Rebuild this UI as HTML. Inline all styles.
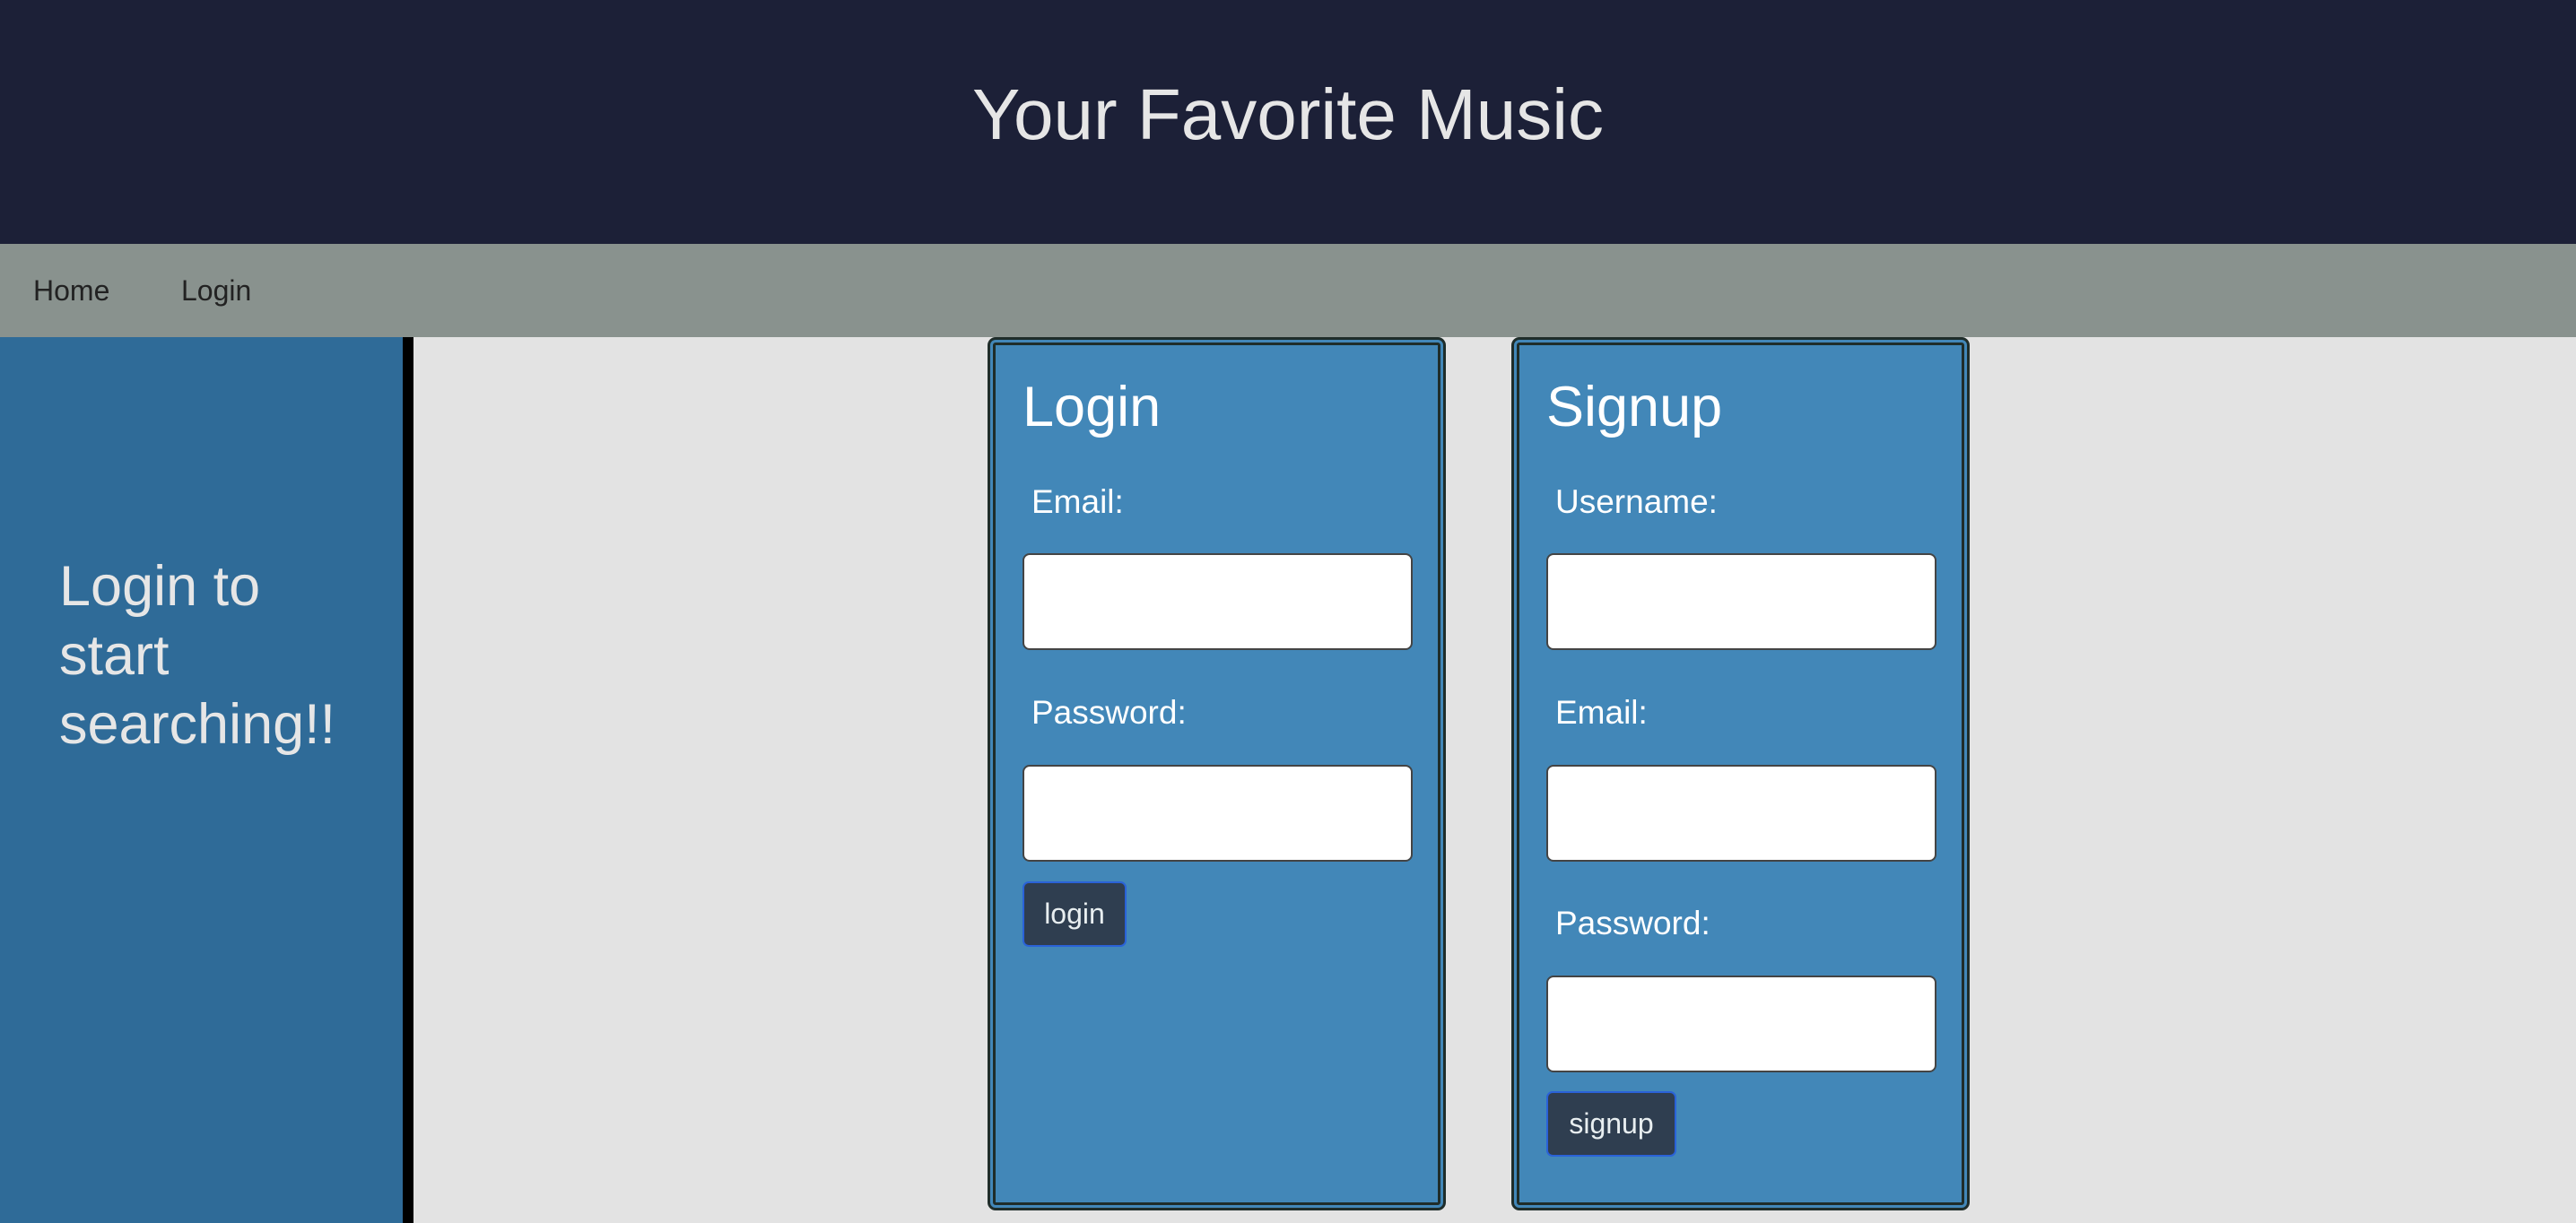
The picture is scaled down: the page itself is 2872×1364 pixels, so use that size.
<!DOCTYPE html>
<html><head><meta charset="utf-8"><style>
*{box-sizing:border-box;margin:0;padding:0}
body{width:2872px;height:1364px;overflow:hidden;background:#e3e3e3;font-family:"Liberation Sans",Arial,sans-serif;position:relative}
.hdr{position:absolute;left:0;top:0;width:2872px;height:272px;background:#1c2037;color:#e6e6e6;font-size:80px;text-align:center;line-height:256px}
.nav{position:absolute;left:0;top:272px;width:2872px;height:104px;background:#89928e;color:#222}
.nav span{position:absolute;top:34px;font-size:32px}
.side{position:absolute;left:0;top:376px;width:449px;height:988px;background:#2f6b98;border-right:12px solid #000;box-sizing:content-box}
.side p{position:absolute;left:66px;top:240px;font-size:63px;line-height:77px;color:#e6e6e6}
.card{position:absolute;top:376px;width:511px;height:974px;background:#4287b8;border:9px double #1f2d2a;border-radius:9px}
.card h2{position:absolute;left:30px;top:33px;font-size:63px;font-weight:normal;color:#fff}
.card label{position:absolute;left:40px;font-size:37px;color:#fff}
.card .in{position:absolute;left:30px;width:435px;height:108px;background:#fff;border:2px solid #444;border-radius:8px}
.card .btn{position:absolute;left:30px;height:73px;background:#2f3e50;border:2px solid #2a62d8;border-radius:7px;color:#e8eef0;font-size:32px;text-align:center;line-height:68px}
</style></head><body>
<div class="hdr">Your Favorite Music</div>
<div class="nav"><span style="left:37px">Home</span><span style="left:202px">Login</span></div>
<div class="side"><p>Login to<br>start<br>searching!!</p></div>
<div class="card" style="left:1101px">
<h2>Login</h2>
<label style="top:154px">Email:</label>
<div class="in" style="top:232px"></div>
<label style="top:389px">Password:</label>
<div class="in" style="top:468px"></div>
<div class="btn" style="top:598px;width:116px">login</div>
</div>
<div class="card" style="left:1685px">
<h2>Signup</h2>
<label style="top:154px">Username:</label>
<div class="in" style="top:232px"></div>
<label style="top:389px">Email:</label>
<div class="in" style="top:468px"></div>
<div class="in" style="top:703px"></div>
<label style="top:624px">Password:</label>
<div class="btn" style="top:832px;width:145px">signup</div>
</div>
</body></html>
